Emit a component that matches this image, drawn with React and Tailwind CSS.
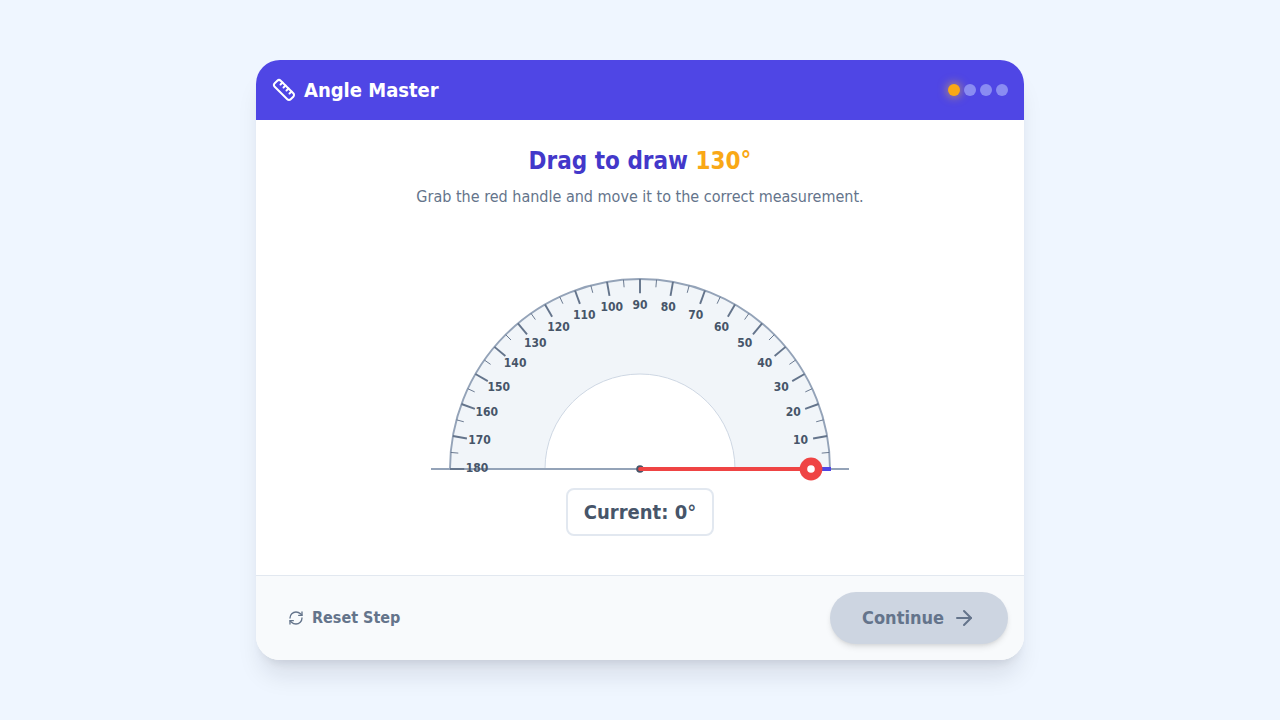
import { ArrowRight, RefreshCw, Ruler } from "lucide-react";
import { useRef, useState } from "react";

const CX = 240;
const CY = 221;
const R = 190;

function polar(radius, deg) {
  const a = (deg * Math.PI) / 180;
  return [CX + radius * Math.cos(a), CY - radius * Math.sin(a)];
}

function Protractor({ angle, onChange }) {
  const ref = useRef(null);
  const [dragging, setDragging] = useState(false);
  const degrees = Array.from({ length: 37 }, (_, i) => i * 5);
  const [hx, hy] = polar(171, angle);

  function move(e) {
    if (!dragging) return;
    const box = ref.current.getBoundingClientRect();
    const scale = 480 / box.width;
    const dx = (e.clientX - box.left) * scale - CX;
    const dy = CY - (e.clientY - box.top) * scale;
    const deg = Math.round((Math.atan2(dy, dx) * 180) / Math.PI);
    onChange(deg < -90 ? 180 : Math.max(0, deg));
  }

  return (
    <svg
      ref={ref}
      viewBox="0 0 480 240"
      className="w-full max-w-[480px] touch-none select-none"
      onPointerMove={move}
      onPointerUp={() => setDragging(false)}
      onPointerLeave={() => setDragging(false)}
    >
      <path d="M50 221A190 190 0 0 1 430 221Z" fill="#f1f5f9" stroke="#94a3b8" strokeWidth="1.9" />
      <path d="M145 221A95 95 0 0 1 335 221Z" fill="#ffffff" stroke="#cbd5e1" strokeWidth="0.95" />
      <path d="M31 221H449" stroke="#94a3b8" strokeWidth="1.9" />
      {degrees.map((d) => {
        const major = d % 10 === 0;
        const [x1, y1] = polar(R, d);
        const [x2, y2] = polar(R - (major ? 14.25 : 7.6), d);
        const [tx, ty] = polar(163, d);
        return (
          <g key={d}>
            <line x1={x1} y1={y1} x2={x2} y2={y2} stroke="#64748b" strokeWidth={major ? 1.9 : 0.95} />
            {major && d > 0 && (
              <text x={tx} y={ty + 3} textAnchor="middle" fill="#475569" className="text-[12px] font-bold">
                {d}
              </text>
            )}
          </g>
        );
      })}
      <path d="M240 221H431" stroke="#4f46e5" strokeWidth="3.8" />
      <circle cx={CX} cy={CY} r="3.8" fill="#475569" />
      <line x1={CX} y1={CY} x2={hx} y2={hy} stroke="#ef4444" strokeWidth="3.8" strokeLinecap="round" />
      <g className="cursor-grab" onPointerDown={() => setDragging(true)}>
        <circle cx={hx} cy={hy} r="11.4" fill="#ef4444" />
        <circle cx={hx} cy={hy} r="3.8" fill="#ffffff" />
      </g>
    </svg>
  );
}

export default function App() {
  const [angle, setAngle] = useState(0);
  const target = 130;
  const ready = angle === target;

  return (
    <div className="flex min-h-screen items-center justify-center bg-[#eff6ff] p-4 font-[Tahoma,'DejaVu_Sans_Condensed','DejaVu_Sans',sans-serif]">
      <div className="flex min-h-[600px] w-full max-w-3xl flex-col overflow-hidden rounded-3xl bg-white shadow-[0_20px_25px_-5px_rgba(15,23,42,0.1),0_8px_10px_-6px_rgba(15,23,42,0.1)]">
        <header className="flex h-[60px] items-center justify-between bg-[#4f46e5] px-4 text-white">
          <h1 className="flex items-center gap-2 text-xl font-bold">
            <Ruler size={24} />
            Angle Master
          </h1>
          <div className="flex gap-1">
            <span className="size-3 rounded-full bg-[#f9a816] shadow-[0_0_10px_1px_#fbbf2499]" />
            <span className="size-3 rounded-full bg-[#8a8cf2]" />
            <span className="size-3 rounded-full bg-[#8a8cf2]" />
            <span className="size-3 rounded-full bg-[#8a8cf2]" />
          </div>
        </header>

        <main className="flex flex-1 flex-col items-center px-4 pt-[25px]">
          <h2 className="text-2xl font-bold text-[#4338ca]">
            Drag to draw <span className="text-[#f9a816]">{target}°</span>
          </h2>
          <p className="mt-2 text-base text-[#64748b]">
            Grab the red handle and move it to the correct measurement.
          </p>
          <div className="mt-[39px] flex w-full justify-center">
            <Protractor angle={angle} onChange={setAngle} />
          </div>
          <output className="rounded-lg border-2 border-[#e2e8f0] bg-white px-4 py-2 text-xl font-bold text-[#475569]">
            Current: {angle}°
          </output>
        </main>

        <footer className="flex items-center justify-between border-t border-[#e2e8f0] bg-[#f8fafc] p-4">
          <button
            type="button"
            onClick={() => setAngle(0)}
            className="flex items-center gap-2 px-4 py-2 text-base font-bold text-[#64748b]"
          >
            <RefreshCw size={16} />
            Reset Step
          </button>
          <button
            type="button"
            disabled={!ready}
            className="flex items-center gap-2 rounded-full bg-[#4f46e5] px-8 py-3 text-lg font-bold text-white shadow-md disabled:bg-[#cdd5e1] disabled:text-[#64748b]"
          >
            Continue
            <ArrowRight size={24} />
          </button>
        </footer>
      </div>
    </div>
  );
}
